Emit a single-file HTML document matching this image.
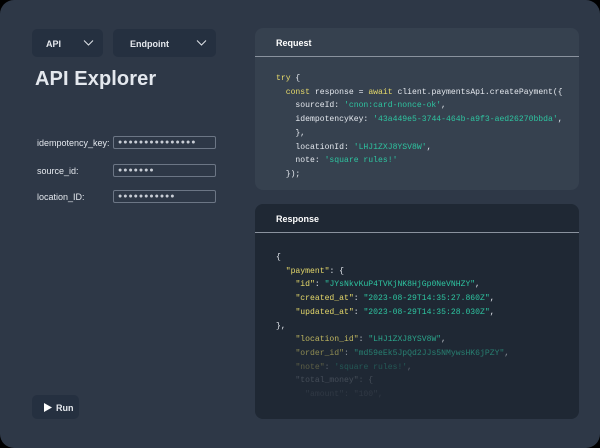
<!DOCTYPE html>
<html><head><style>
*{margin:0;padding:0;box-sizing:border-box}
body{width:600px;height:448px;background:#000;overflow:hidden;font-family:"Liberation Sans",sans-serif}
.page{position:absolute;left:0;top:0;width:600px;height:448px;background:#2e3847;border-radius:14px}
.dd{position:absolute;top:29px;height:28px;background:#253040;border-radius:5px;color:#e6e9ee;font-size:9px;font-weight:bold}
.dd span{position:absolute;left:14px;top:10px}
.dd svg{position:absolute;right:9px;top:11px}
h1{position:absolute;left:35px;top:68px;font-size:20px;color:#e4e8ee;font-weight:bold;letter-spacing:0.1px}
.lbl{position:absolute;left:37px;color:#e4e8ee;font-size:9px}
.inp{position:absolute;left:113px;width:103px;height:13px;border:1px solid #6c7685;border-radius:2px;color:#c9ced6;font-size:7px;letter-spacing:1px;padding-left:4px;line-height:11px}
.panel{position:absolute;left:255px;width:324px;border-radius:8px;overflow:hidden}
.ph{height:29px;border-bottom:1px solid #8a929e;color:#fff;font-size:9px;font-weight:bold;padding:10px 0 0 21px}
pre{font-family:"Liberation Mono",monospace;font-size:8.1px;color:#e4e8ee;padding-left:21px}
.s{color:#2ec4a0}.k{color:#e6d96a}
.run{position:absolute;left:32px;top:395px;width:47px;height:24px;background:#253040;border-radius:5px;color:#e6e9ee;font-size:9px;font-weight:bold}
</style></head><body><div class="page">
<div class="dd" style="left:32px;width:71px"><span>API</span><svg width="11" height="6"><path d="M1 .5L5.5 5L10 .5" stroke="#dfe3e8" stroke-width="1" fill="none"/></svg></div>
<div class="dd" style="left:113px;width:103px"><span style="left:17px">Endpoint</span><svg width="11" height="6"><path d="M1 .5L5.5 5L10 .5" stroke="#dfe3e8" stroke-width="1" fill="none"/></svg></div>
<h1>API Explorer</h1>
<div class="lbl" style="top:138px">idempotency_key:</div><div class="inp" style="top:136px">●●●●●●●●●●●●●●●</div>
<div class="lbl" style="top:166px">source_id:</div><div class="inp" style="top:164px">●●●●●●●</div>
<div class="lbl" style="top:192px">location_ID:</div><div class="inp" style="top:190px">●●●●●●●●●●●</div>
<div class="panel" style="top:28px;height:162px;background:#36414f">
<div class="ph">Request</div>
<pre style="line-height:13.7px;padding-top:15px"><span class="k">try</span> {
  <span class="k">const</span> response = <span class="k">await</span> client.paymentsApi.createPayment({
    sourceId: <span class="s">'cnon:card-nonce-ok'</span>,
    idempotencyKey: <span class="s">'43a449e5-3744-464b-a9f3-aed26270bbda'</span>,
    },
    locationId: <span class="s">'LHJ1ZXJ8YSV8W'</span>,
    note: <span class="s">'square rules!'</span>
  });</pre></div>
<div class="panel" style="top:204px;height:215px;background:#1f2834">
<div class="ph">Response</div>
<pre style="line-height:13.7px;padding-top:18px">{
  <span class="k">"payment"</span>: {
    <span class="k">"id"</span>: <span class="s">"JYsNkvKuP4TVKjNK8HjGp0NeVNHZY"</span>,
    <span class="k">"created_at"</span>: <span class="s">"2023-08-29T14:35:27.860Z"</span>,
    <span class="k">"updated_at"</span>: <span class="s">"2023-08-29T14:35:28.030Z"</span>,
},
<span style="opacity:.8">    <span class="k">"location_id"</span>: <span class="s">"LHJ1ZXJ8YSV8W"</span>,</span>
<span style="opacity:.55">    <span class="k">"order_id"</span>: <span class="s">"md59eEk5JpQd2JJs5NMywsHK6jPZY"</span>,</span>
<span style="opacity:.3">    <span class="k">"note"</span>: <span class="s">'square rules!'</span>,</span>
<span style="opacity:.18">    "total_money": {</span>
<span style="opacity:.08">      "amount": "100",</span></pre></div>
<div class="run"><svg style="position:absolute;left:12px;top:8px" width="8" height="9"><path d="M0 0L8 4.5L0 9Z" fill="#fff"/></svg><span style="position:absolute;left:24px;top:8px">Run</span></div>
</div></body></html>
